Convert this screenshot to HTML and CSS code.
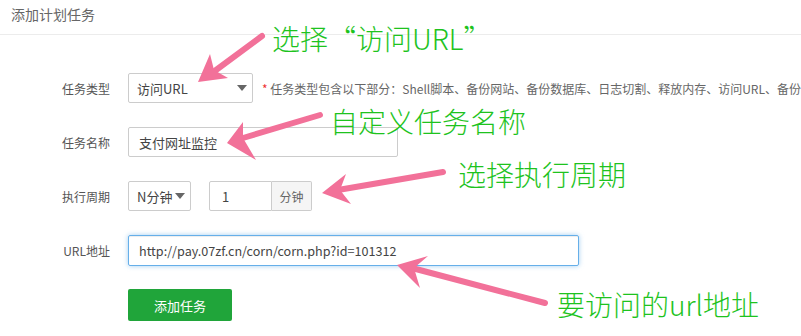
FILE: index.html
```html
<!DOCTYPE html>
<html>
<head>
<meta charset="utf-8">
<link rel="stylesheet" href="styles.css">
</head>
<body>
<div class="page">
  <div class="title">添加计划任务</div>
  <div class="form">
    <div class="row">
      <div class="label">任务类型</div>
      <div class="select w125"><span>访问URL</span><i class="caret"></i></div>
      <div class="hint"><span class="star">*</span> 任务类型包含以下部分：Shell脚本、备份网站、备份数据库、日志切割、释放内存、访问URL、备份</div>
    </div>
    <div class="row">
      <div class="label">任务名称</div>
      <div class="input w270">支付网址监控</div>
    </div>
    <div class="row">
      <div class="label">执行周期</div>
      <div class="select w63"><span>N分钟</span><i class="caret"></i></div>
      <div class="group">
        <div class="num">1</div>
        <div class="addon">分钟</div>
      </div>
    </div>
    <div class="row">
      <div class="label">URL地址</div>
      <div class="input w451 focus">http://pay.07zf.cn/corn/corn.php?id=101312</div>
    </div>
    <div class="row">
      <div class="label"></div>
      <div class="btn">添加任务</div>
    </div>
  </div>

  <svg class="arrows" width="801" height="336" viewBox="0 0 801 336">
    <g stroke="#f27199" stroke-width="6" stroke-linecap="round" fill="none">
      <line x1="262" y1="36" x2="212" y2="73"/>
      <line x1="320" y1="115" x2="243" y2="138"/>
      <line x1="443" y1="172" x2="338" y2="190"/>
      <line x1="545" y1="303" x2="412" y2="268"/>
    </g>
    <g fill="#f27199">
      <polygon points="198,82 210,54 214,70 228,78"/>
      <polygon points="227,143 243,122 243,138 256,160"/>
      <polygon points="322,193 346,174 340,190 351,204"/>
      <polygon points="397,265 428,256 414,268 420,288"/>
    </g>
  </svg>
  <div class="note n1">选择“访问URL”</div>
  <div class="note n2">自定义任务名称</div>
  <div class="note n3">选择执行周期</div>
  <div class="note n4">要访问的url地址</div>
</div>
</body>
</html>
```
FILE: styles.css
```css
html, body {
  margin: 0;
  padding: 0;
  background: #fff;
}
.page {
  position: relative;
  width: 801px;
  height: 336px;
  overflow: hidden;
  font-family: "Noto Sans CJK SC", "Noto Sans", sans-serif;
  color: #555;
}
.title {
  height: 34px;
  line-height: 29px;
  padding-left: 11px;
  font-size: 14px;
  color: #666;
  border-bottom: 1px solid #ececec;
}
.form {
  padding-top: 38px;
  display: flex;
  flex-direction: column;
  gap: 24px;
}
.row {
  display: flex;
  align-items: center;
  height: 30px;
  white-space: nowrap;
}
.label {
  width: 110px;
  margin-right: 18px;
  text-align: right;
  font-size: 12px;
  color: #555;
  flex: none;
}
.select, .input, .num {
  box-sizing: border-box;
  height: 30px;
  border: 1px solid #ccc;
  border-radius: 2px;
  font-size: 13px;
  color: #444;
  display: flex;
  align-items: center;
  flex: none;
}
.select {
  padding-left: 8px;
  justify-content: space-between;
  padding-right: 5px;
}
.caret {
  width: 0;
  height: 0;
  border-left: 5px solid transparent;
  border-right: 5px solid transparent;
  border-top: 6px solid #666;
}
.w125 { width: 125px; }
.w63 { width: 63px; }
.w270 { width: 270px; padding-left: 10px; }
.w451 { width: 451px; padding-left: 10px; height: 31px; font-size: 12.6px; }
.focus {
  border-color: #66afe9;
  box-shadow: inset 0 1px 1px rgba(0,0,0,.075), 0 0 5px rgba(102,175,233,.6);
}
.hint {
  margin-left: 9px;
  font-size: 12px;
  color: #666;
}
.star { color: #e33; }
.group {
  margin-left: 18px;
  display: flex;
  height: 30px;
}
.num {
  width: 63px;
  padding-left: 12px;
  border-radius: 2px 0 0 2px;
}
.addon {
  box-sizing: border-box;
  width: 40px;
  height: 30px;
  border: 1px solid #ccc;
  border-left: none;
  border-radius: 0 2px 2px 0;
  background: #f5f5f5;
  font-size: 12px;
  color: #666;
  display: flex;
  align-items: center;
  justify-content: center;
}
.btn {
  width: 104px;
  height: 32px;
  margin-top: 2px;
  background: #20a53a;
  border-radius: 2px;
  color: #fff;
  font-size: 13px;
  display: flex;
  align-items: center;
  justify-content: center;
}
.arrows {
  position: absolute;
  left: 0;
  top: 0;
}
.note {
  position: absolute;
  font-size: 28px;
  font-weight: 300;
  line-height: 1;
  color: #1ec31e;
  white-space: nowrap;
}
.n1 { left: 272px; top: 24px; }
.n2 { left: 330px; top: 107px; }
.n3 { left: 458px; top: 160px; }
.n4 { left: 557px; top: 290px; }
```
